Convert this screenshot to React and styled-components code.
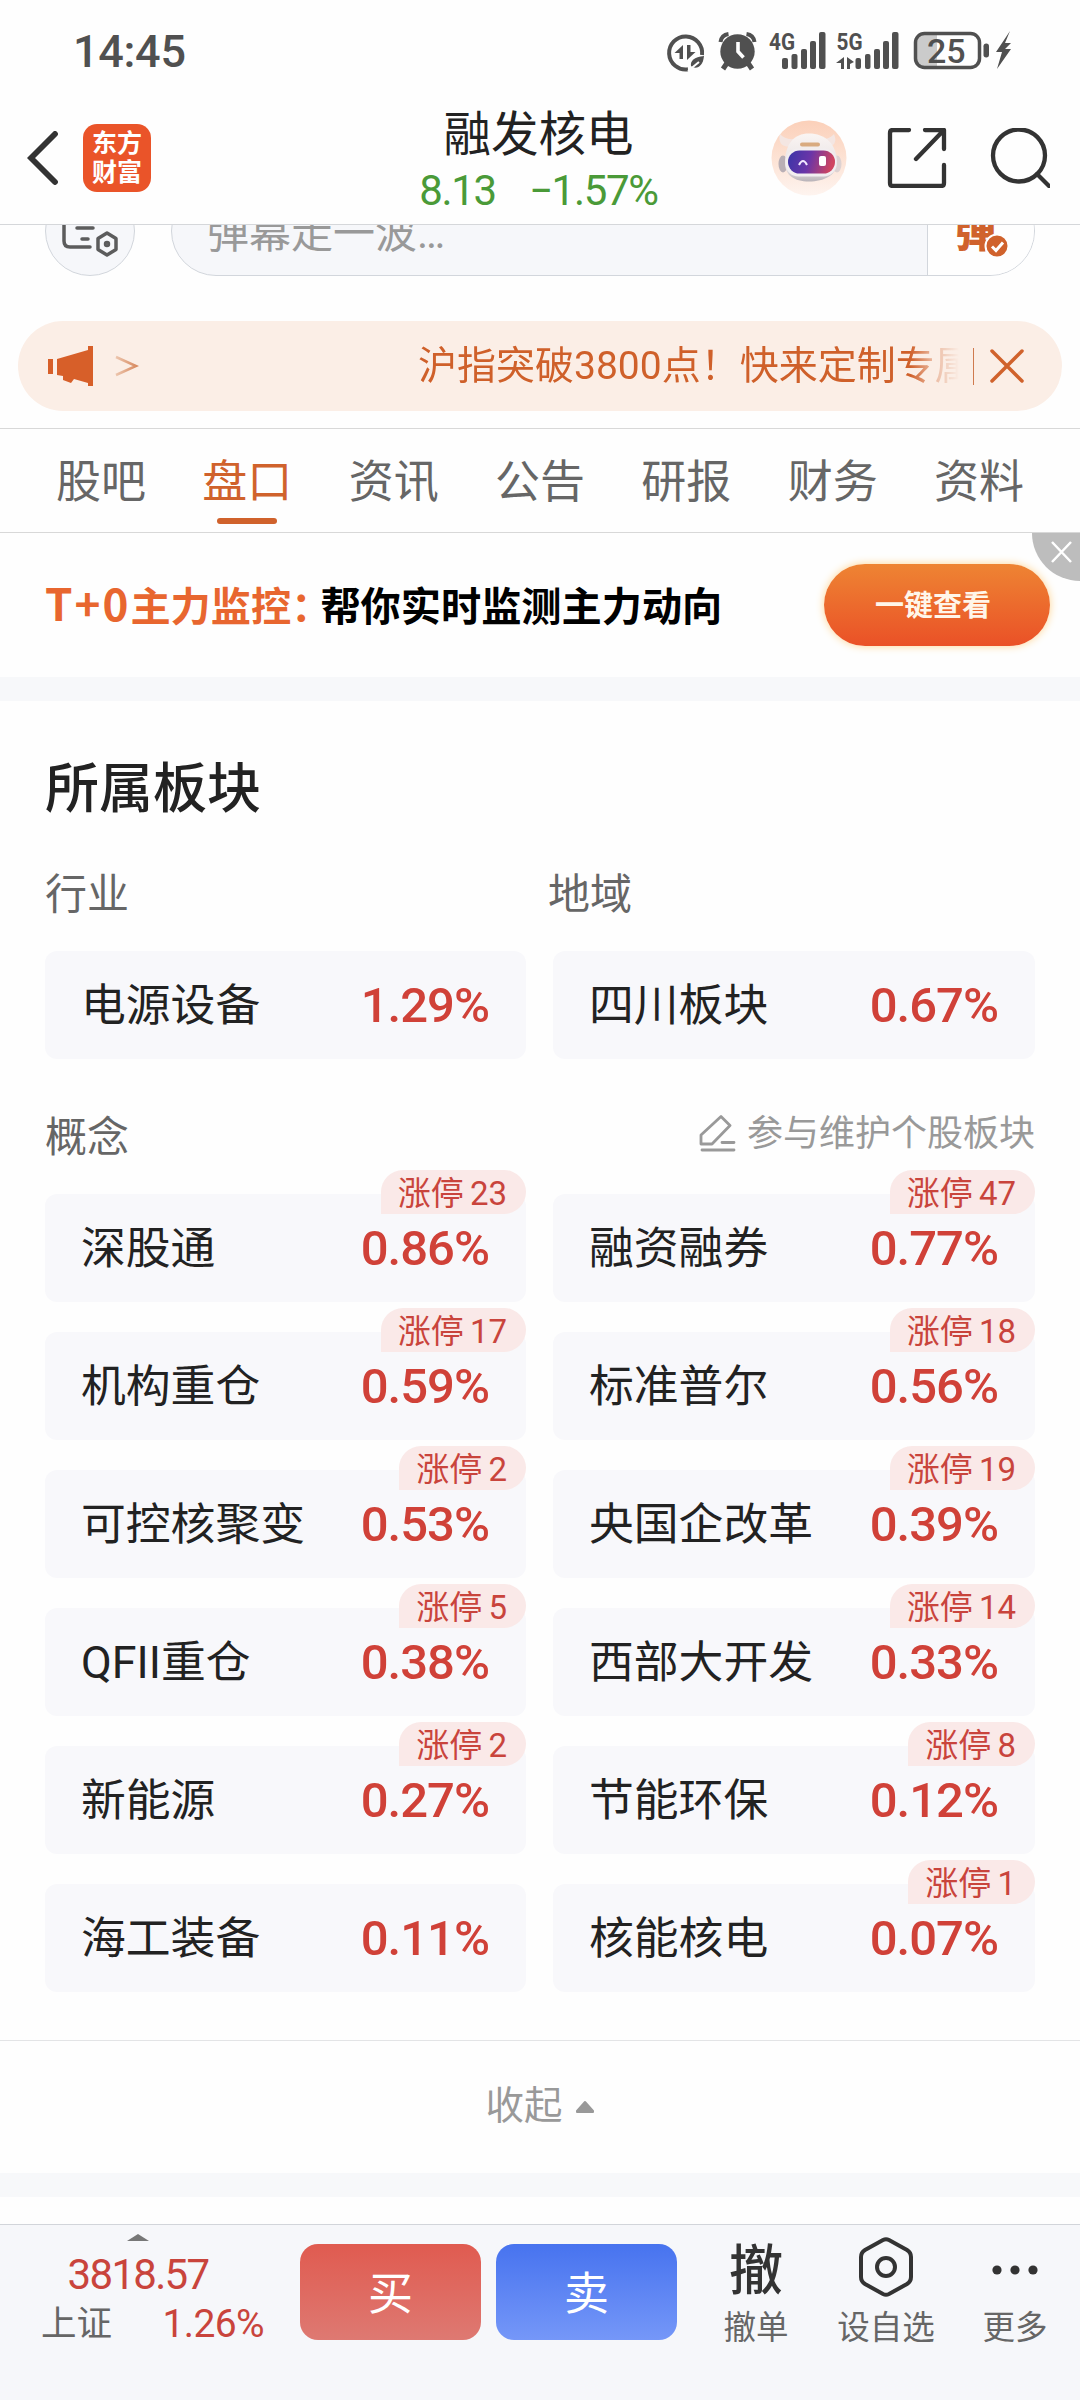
import styled, { createGlobalStyle } from "styled-components";

const GlobalStyle = createGlobalStyle`
    * {
        box-sizing: border-box;
    }
    body {
        margin: 0;
        background-color: #fefefe;
        font-family: Roboto, "Noto Sans CJK SC", sans-serif;
        color: #222;
    }
    svg {
        display: block;
        flex: none;
    }
    `;

const Page = styled.div`
    width: 1080px;
    height: 2400px;
    overflow: hidden;
    display: flex;
    flex-direction: column;
    `;

const StatusBar = styled.div`
    height: 100px;
    flex: none;
    display: flex;
    justify-content: space-between;
    padding: 23px 68px 0 73px;
    `;
const Clock = styled.span`
    font-size: 45px;
    line-height: 58px;
    font-weight: 500;
    letter-spacing: -0.3px;
    color: #505050;
    `;

const Header = styled.header`
    height: 125px;
    flex: none;
    display: flex;
    justify-content: space-between;
    border-bottom: 1px solid #d5d7da;
    padding: 0 30px 0 27px;
    `;
const HeadLeft = styled.div`
    width: 300px;
    height: 115px;
    display: flex;
    align-items: center;
    gap: 25px;
    `;
const HeadRight = styled.div`
    width: 300px;
    height: 115px;
    display: flex;
    align-items: center;
    justify-content: flex-end;
    `;
const Logo = styled.div`
    width: 68px;
    height: 68px;
    border-radius: 14px;
    background-color: #ea5429;
    color: white;
    font-size: 25px;
    line-height: 29px;
    font-weight: 700;
    text-align: center;
    padding-top: 5px;
    `;
const HeadTitle = styled.div`
    display: flex;
    flex-direction: column;
    align-items: center;
    padding-top: 7px;
    `;
const StockName = styled.h1`
    margin: 0;
    font-size: 47.5px;
    line-height: 56px;
    font-weight: 400;
    `;
const StockPrice = styled.div`
    display: flex;
    gap: 33px;
    margin-top: 6px;
    font-size: 42px;
    line-height: 44px;
    letter-spacing: -1.3px;
    color: #4a9a38;
    `;

const Danmaku = styled.div`
    height: 51px;
    flex: none;
    display: flex;
    align-items: flex-end;
    gap: 36px;
    padding: 0 45px;
    overflow: hidden;
    `;
const RoundButton = styled.button`
    width: 90px;
    height: 90px;
    flex: none;
    padding: 0;
    border: 1px solid #d2d6dc;
    border-radius: 45px;
    background-color: #f6f7fa;
    display: flex;
    align-items: center;
    justify-content: center;
    `;
const DanmakuInput = styled.div`
    flex: 1;
    height: 90px;
    border: 1px solid #d2d6dc;
    border-radius: 45px;
    overflow: hidden;
    display: flex;
    background-color: #f6f7fa;
    `;
const Placeholder = styled.span`
    flex: 1;
    padding-left: 35px;
    font-size: 42px;
    line-height: 94px;
    color: #999;
    `;
const DanmakuSwitch = styled.div`
    position: relative;
    width: 107px;
    border-left: 1px solid #d2d6dc;
    background-color: #fefefe;
    padding-left: 27px;
    font-size: 41px;
    line-height: 92px;
    font-weight: 900;
    color: #d0622c;
    svg {
        position: absolute;
        left: 56px;
        top: 46px;
    }
    `;

const Notice = styled.div`
    height: 90px;
    flex: none;
    margin: 45px 18px 17px;
    padding: 0 38px 0 30px;
    border-radius: 45px;
    background-color: #fbeee6;
    display: flex;
    align-items: center;
    `;
const NoticeText = styled.div`
    width: 544px;
    margin-left: 279px;
    overflow: hidden;
    white-space: nowrap;
    font-size: 39px;
    line-height: 90px;
    color: #cf602a;
    mask-image: linear-gradient(to right, #000 91%, rgba(0, 0, 0, 0.4) 95%, transparent 100%);
    `;
const NoticeLine = styled.div`
    width: 1px;
    height: 37px;
    margin: 0 16px 0 14px;
    background-color: #cf7a4e;
    `;

const Tabs = styled.nav`
    height: 105px;
    flex: none;
    display: flex;
    justify-content: space-between;
    padding: 0 56px;
    border-top: 1px solid #d8d8d8;
    border-bottom: 1px solid #d8d8d8;
    `;
const Tab = styled.div`
    display: flex;
    flex-direction: column;
    align-items: center;
    font-size: 45px;
    line-height: 89px;
    padding-top: 9px;
    height: 103px;
    color: ${(props) => (props.$active ? "#d0622c" : "#666")};
    &::after {
        content: "";
        width: 60px;
        height: 6px;
        margin-top: -9px;
        flex: none;
        border-radius: 3px;
        background-color: ${(props) => (props.$active ? "#d0622c" : "transparent")};
    }
    `;

const Banner = styled.div`
    position: relative;
    height: 144px;
    flex: none;
    display: flex;
    align-items: center;
    justify-content: space-between;
    padding: 0 30px 0 45px;
    `;
const BannerText = styled.div`
    padding-bottom: 1px;
    font-size: 40.2px;
    line-height: 50px;
    font-weight: 700;
    color: #000;
    white-space: nowrap;
    `;
const BannerLabel = styled.span`
    color: #e8662f;
    margin-right: -11px;
    `;
const BannerTag = styled.span`
    font-family: "Noto Sans CJK SC", sans-serif;
    font-size: 44px;
    letter-spacing: 2px;
    `;
const BannerButton = styled.button`
    width: 226px;
    height: 82px;
    padding: 0 8px 4px 0;
    border: 0;
    border-radius: 41px;
    background: linear-gradient(#ee8433, #ea5127);
    box-shadow: 0 0 8px #ffd592;
    color: #fff6ea;
    font-family: inherit;
    font-size: 29px;
    font-weight: 700;
    `;
const BannerClose = styled.div`
    position: absolute;
    top: 0;
    right: 0;
    width: 48px;
    height: 48px;
    border-bottom-left-radius: 48px;
    background-color: #bdbdbd;
    padding: 8px 0 0 19px;
    `;

const Divider = styled.div`
    height: 24px;
    flex: none;
    background-color: #f7f8fa;
    `;

const Section = styled.section`
    height: 1339px;
    flex: none;
    padding: 47px 45px 0;
    `;
const SectionTitle = styled.h2`
    margin: 0;
    font-size: 54px;
    line-height: 84px;
    font-weight: 500;
    `;
const Labels = styled.div`
    height: 119px;
    display: grid;
    grid-template-columns: 503px 1fr;
    align-items: center;
    padding-top: 6px;
    `;
const Label = styled.span`
    font-size: 42px;
    line-height: 60px;
    color: #666;
    `;
const ConceptHead = styled.div`
    height: 135px;
    display: flex;
    align-items: center;
    justify-content: space-between;
    padding-top: 22px;
    `;
const Maintain = styled.div`
    display: flex;
    align-items: center;
    gap: 11px;
    margin-top: -7px;
    font-size: 36px;
    line-height: 50px;
    color: #999;
    `;
const Cards = styled.div`
    display: grid;
    grid-template-columns: 481px 482px;
    column-gap: 27px;
    row-gap: 30px;
    `;
const Card = styled.div`
    position: relative;
    height: 108px;
    border-radius: 12px;
    background-color: #f8f8fb;
    display: flex;
    align-items: center;
    justify-content: space-between;
    padding: 2px 37px 0 36px;
    `;
const CardName = styled.span`
    font-size: 44.8px;
    line-height: 60px;
    `;
const CardRate = styled.span`
    font-size: 49px;
    line-height: 60px;
    font-weight: 500;
    letter-spacing: -1px;
    color: #d04138;
    `;
const Badge = styled.span`
    position: absolute;
    right: 0;
    top: -24px;
    height: 44px;
    padding: 0 19px 0 17px;
    border-radius: 22px 22px 22px 0;
    background-color: #fae9e8;
    color: #c9443c;
    font-size: 33px;
    line-height: 47px;
    word-spacing: -2px;
    `;

const Collapse = styled.div`
    height: 133px;
    flex: none;
    border-top: 1px solid #e3e4e6;
    display: flex;
    align-items: center;
    justify-content: center;
    gap: 12px;
    padding-bottom: 3px;
    font-size: 38.5px;
    line-height: 60px;
    color: #999;
    svg {
        margin-top: 2px;
    }
    `;
const Spacer = styled.div`
    flex: 1;
    `;

const BottomBar = styled.footer`
    height: 176px;
    flex: none;
    border-top: 1px solid #d2d5da;
    background-color: #f6f7fa;
    display: flex;
    `;
const IndexBox = styled.div`
    width: 276px;
    margin-right: 24px;
    display: flex;
    flex-direction: column;
    align-items: center;
    padding-top: 9px;
    `;
const IndexValue = styled.div`
    margin-top: 10px;
    font-size: 42px;
    line-height: 48px;
    letter-spacing: -1.7px;
    color: #c9443c;
    `;
const IndexRow = styled.div`
    width: 276px;
    padding: 0 12px 0 41px;
    display: flex;
    justify-content: space-between;
    font-size: 35.5px;
    line-height: 50px;
    color: #666;
    `;
const IndexRate = styled.span`
    font-size: 39px;
    letter-spacing: -0.6px;
    color: #c9443c;
    `;
const TradeButton = styled.button`
    width: 181px;
    height: 96px;
    margin: 19px 15px 0 0;
    padding: 0 0 4px;
    border: 0;
    border-radius: 18px;
    background: ${(props) => (props.$sell ? "linear-gradient(#4773ef, #7597f8)" : "linear-gradient(#e05b50, #de7972)")};
    color: white;
    font-family: inherit;
    font-size: 45px;
    `;
const Tool = styled.div`
    width: ${(props) => props.$width}px;
    display: flex;
    flex-direction: column;
    align-items: center;
    font-size: 32.5px;
    line-height: 44px;
    color: #666;
    `;
const ToolIcon = styled.div`
    height: 81px;
    padding-top: ${(props) => (props.$text ? "13px" : "3px")};
    display: flex;
    align-items: center;
    font-size: 54px;
    font-weight: 500;
    color: #333;
    `;

const industry = [
    { name: "电源设备", rate: "1.29%" },
    { name: "四川板块", rate: "0.67%" },
];

const concepts = [
    { name: "深股通", rate: "0.86%", up: 23 },
    { name: "融资融券", rate: "0.77%", up: 47 },
    { name: "机构重仓", rate: "0.59%", up: 17 },
    { name: "标准普尔", rate: "0.56%", up: 18 },
    { name: "可控核聚变", rate: "0.53%", up: 2 },
    { name: "央国企改革", rate: "0.39%", up: 19 },
    { name: "QFII重仓", rate: "0.38%", up: 5 },
    { name: "西部大开发", rate: "0.33%", up: 14 },
    { name: "新能源", rate: "0.27%", up: 2 },
    { name: "节能环保", rate: "0.12%", up: 8 },
    { name: "海工装备", rate: "0.11%" },
    { name: "核能核电", rate: "0.07%", up: 1 },
];

const tabs = ["股吧", "盘口", "资讯", "公告", "研报", "财务", "资料"];

const StatusIcons = () => (
    <svg width="348" height="58" viewBox="664 23 348 58" fill="#505050" fontFamily="Roboto" fontWeight="700">
        {/* data saver */}
        <path d="M702 55A16.500 16.500 0 1 0 688 69.300" fill="none" stroke="#505050" strokeWidth="4" />
        <path d="M683 45v14h-3.500v-6h-5zM687 45h3.500v7h5l-8.500 8z" />
        <path d="M704 56c-10 1-14 5-13 10 5 4 12 1 13-10z" />
        <path d="M688 71l11-9" stroke="#fefefe" strokeWidth="2" />
        {/* alarm */}
        <circle cx="737.500" cy="51.500" r="17.200" />
        <path d="M720.500 42q1-7 8-8M754.500 42q-1-7-8-8" fill="none" stroke="#505050" strokeWidth="4" />
        <path d="M727 63l-4 6M748 63l4 6" stroke="#505050" strokeWidth="5" />
        <path d="M738 42v9.500l5.500 6" fill="none" stroke="#fefefe" strokeWidth="3.600" />
        {/* signals */}
        <text x="769" y="50" fontSize="24" textLength="26" lengthAdjust="spacingAndGlyphs">4G</text>
        <rect x="782" y="58" width="6" height="11" rx="2" />
        <rect x="791.500" y="54" width="6" height="15" rx="2" />
        <rect x="801" y="49" width="6" height="20" rx="2" />
        <rect x="810" y="41" width="6" height="28" rx="2" />
        <rect x="819" y="32" width="6.500" height="37" rx="2" />
        <text x="836.500" y="50" fontSize="24" textLength="26" lengthAdjust="spacingAndGlyphs">5G</text>
        <path d="M844 57v12h-3v-6h-5zM847 57v12h3v-5l4-2z" />
        <rect x="855.500" y="58" width="5.500" height="11" rx="2" />
        <rect x="865" y="54" width="5.500" height="15" rx="2" />
        <rect x="874" y="49" width="6" height="20" rx="2" />
        <rect x="883" y="41" width="6" height="28" rx="2" />
        <rect x="892" y="32" width="6.500" height="37" rx="2" />
        {/* battery */}
        <path d="M924 34h13v33h-13q-8 0-8-8v-17q0-8 8-8z" fill="#cbcbcb" />
        <rect x="915.500" y="33.500" width="64" height="34" rx="9" fill="none" stroke="#505050" strokeWidth="3.500" />
        <rect x="983.500" y="43.500" width="5.500" height="14" rx="2.700" />
        <text x="927" y="62.500" fontSize="34" fontWeight="500">25</text>
        <path d="M1010 31l-14 21h6l-5 17 14-20h-6l6-6h-6z" />
    </svg>
);

const Robot = () => (
    <svg width="76" height="76" viewBox="0 0 76 76">
        <defs>
            <linearGradient id="robotBg" x1="0" y1="0" x2="0" y2="1">
                <stop offset="0" stopColor="#fbd0b9" />
                <stop offset="1" stopColor="#fef4ef" />
            </linearGradient>
            <linearGradient id="robotFace" x1="0" y1="0" x2="1" y2="0.15">
                <stop offset="0" stopColor="#3a35a8" />
                <stop offset="0.5" stopColor="#6a35a8" />
                <stop offset="1" stopColor="#cf4560" />
            </linearGradient>
            <linearGradient id="robotHead" x1="0" y1="0" x2="0" y2="1">
                <stop offset="0" stopColor="#faf5f3" />
                <stop offset="0.75" stopColor="#e6e0e2" />
                <stop offset="1" stopColor="#b9b3b8" />
            </linearGradient>
        </defs>
        <circle cx="38" cy="38" r="37.500" fill="url(#robotBg)" />
        <path d="M9 14q-3 12 9 13l5-8q-9 1-14-5zM63 14q5 12-8 13l-5-8q8 1 13-5z" fill="#f4e6e2" />
        <ellipse cx="12" cy="44" rx="4.500" ry="8.500" fill="#b9afb5" />
        <ellipse cx="66" cy="44" rx="4.500" ry="8.500" fill="#ddd2d2" />
        <path d="M38 13.500C23 13.500 14 24 14 43c0 12 9 18.500 24 18.500S66 55 66 43C66 24 54 13.500 38 13.500z" fill="url(#robotHead)" />
        <rect x="14.500" y="28.500" width="51" height="28" rx="13" fill="#f2eef0" />
        <rect x="29" y="22.500" width="20" height="4" rx="2" fill="#d9ab80" />
        <rect x="17" y="30.500" width="47" height="23" rx="11.500" fill="url(#robotFace)" />
        <path d="M28 45q4-8 8 0" fill="none" stroke="#f2e8ff" strokeWidth="2" />
        <rect x="48" y="36" width="7" height="10" rx="2" fill="#fff" />
    </svg>
);

const App = () => {
    return (
        <Page>
            <GlobalStyle />
            <StatusBar>
                <Clock>14:45</Clock>
                <StatusIcons />
            </StatusBar>

            <Header>
                <HeadLeft>
                    <svg width="31" height="54" viewBox="0 0 31 54" fill="none" stroke="#333" strokeWidth="5.800" strokeLinecap="round" strokeLinejoin="miter">
                        <path d="M28 3L4 27l24 24" />
                    </svg>
                    <Logo>东方<br />财富</Logo>
                </HeadLeft>
                <HeadTitle>
                    <StockName>融发核电</StockName>
                    <StockPrice><span>8.13</span><span>−1.57%</span></StockPrice>
                </HeadTitle>
                <HeadRight>
                    <Robot />
                    <svg width="203" height="60" viewBox="-41 1 203 60" fill="none" stroke="#333" strokeWidth="4.300" strokeLinecap="round" strokeLinejoin="round">
                        <path d="M21 3H5q-3 0-3 3v50q0 3 3 3h48q3 0 3-3V38M37 3h19v19M55 4L28 32" />
                        <circle cx="131" cy="28.500" r="26" />
                        <path d="M149 47l12 12" />
                    </svg>
                </HeadRight>
            </Header>

            <Danmaku>
                <RoundButton>
                    <svg width="58" height="60" viewBox="0 0 58 60" fill="none" stroke="#5c5c5c" strokeWidth="3.500" strokeLinecap="round">
                        <path d="M52 20V12q0-5-5-5H8q-5 0-5 5v28q0 6 6 6h20" />
                        <path d="M16 27h16M21 38h6" />
                        <path d="M46 32l9 5.500v11L46 54l-9-5.500v-11z" fill="#f6f7fa" strokeLinejoin="round" />
                        <circle cx="46" cy="43" r="1.500" />
                    </svg>
                </RoundButton>
                <DanmakuInput>
                    <Placeholder>弹幕走一波…</Placeholder>
                    <DanmakuSwitch>
                        弹
                        <svg width="26" height="26" viewBox="0 0 26 26">
                            <circle cx="13" cy="13" r="11.500" fill="#d0622c" stroke="#fefefe" strokeWidth="2" />
                            <path d="M8 13.500l4 4 7-8" fill="none" stroke="#fff" strokeWidth="3" />
                        </svg>
                    </DanmakuSwitch>
                </DanmakuInput>
            </Danmaku>

            <Notice>
                <svg width="91" height="40" viewBox="0 0 91 40">
                    <defs>
                        <linearGradient id="arrowFade" x1="68" y1="0" x2="90" y2="0" gradientUnits="userSpaceOnUse">
                            <stop offset="0" stopColor="#ecc5ad" />
                            <stop offset="1" stopColor="#d7875c" />
                        </linearGradient>
                    </defs>
                    <path d="M0 13h5v15H0zM9 13l31-9V0h5v40h-5v-3l-14-4-3 4-8-3v-4l-6-1z" fill="#d75f29" />
                    <path d="M68 11l20 9-20 9" fill="none" stroke="url(#arrowFade)" strokeWidth="2.500" />
                </svg>
                <NoticeText>沪指突破3800点！快来定制专属</NoticeText>
                <NoticeLine />
                <svg width="34" height="34" viewBox="0 0 34 34" stroke="#d0622c" strokeWidth="3.500" strokeLinecap="round">
                    <path d="M2 2l30 30M32 2L2 32" />
                </svg>
            </Notice>

            <Tabs>
                {tabs.map((tab) => (
                    <Tab key={tab} $active={tab === "盘口"}>{tab}</Tab>
                ))}
            </Tabs>

            <Banner>
                <BannerText>
                    <BannerLabel><BannerTag>T+0</BannerTag>主力监控：</BannerLabel>
                    帮你实时监测主力动向
                </BannerText>
                <BannerButton>一键查看</BannerButton>
                <BannerClose>
                    <svg width="22" height="22" viewBox="0 0 22 22" stroke="#fff" strokeWidth="2.500">
                        <path d="M1 1l19 20M20 1L1 21" />
                    </svg>
                </BannerClose>
            </Banner>
            <Divider />

            <Section>
                <SectionTitle>所属板块</SectionTitle>
                <Labels>
                    <Label>行业</Label>
                    <Label>地域</Label>
                </Labels>
                <Cards>
                    {industry.map((item) => (
                        <Card key={item.name}>
                            <CardName>{item.name}</CardName>
                            <CardRate>{item.rate}</CardRate>
                        </Card>
                    ))}
                </Cards>
                <ConceptHead>
                    <Label>概念</Label>
                    <Maintain>
                        <svg width="37" height="38" viewBox="0 0 37 38" fill="none" stroke="#999" strokeWidth="2.800" strokeLinecap="round" strokeLinejoin="round">
                            <path d="M2 29v-9L22 1.500l9 9-18 18.500zM23 27.500h12M3 35h32" />
                        </svg>
                        参与维护个股板块
                    </Maintain>
                </ConceptHead>
                <Cards>
                    {concepts.map((item) => (
                        <Card key={item.name}>
                            <CardName>{item.name}</CardName>
                            <CardRate>{item.rate}</CardRate>
                            {item.up && <Badge>涨停 {item.up}</Badge>}
                        </Card>
                    ))}
                </Cards>
            </Section>

            <Collapse>
                收起
                <svg width="20" height="14" viewBox="0 0 20 14" fill="#999" stroke="#999" strokeWidth="2" strokeLinejoin="round">
                    <path d="M10 2l8 9v1H2v-1z" />
                </svg>
            </Collapse>
            <Divider />
            <Spacer />

            <BottomBar>
                <IndexBox>
                    <svg width="22" height="7" viewBox="0 0 22 7">
                        <path d="M11 0l11 7H0z" fill="#777" />
                    </svg>
                    <IndexValue>3818.57</IndexValue>
                    <IndexRow>上证<IndexRate>1.26%</IndexRate></IndexRow>
                </IndexBox>
                <TradeButton>买</TradeButton>
                <TradeButton $sell>卖</TradeButton>
                <Tool $width={128}>
                    <ToolIcon $text>撤</ToolIcon>
                    撤单
                </Tool>
                <Tool $width={132}>
                    <ToolIcon>
                        <svg width="54" height="60" viewBox="0 0 54 60" fill="none" stroke="#333" strokeWidth="4">
                            <path d="M24 3q3-1.500 6 0l18 10q4 2.500 4 7v20q0 4.500-4 7L30 57q-3 1.500-6 0L6 47q-4-2.500-4-7V20q0-4.500 4-7z" />
                            <circle cx="27" cy="30" r="9" />
                        </svg>
                    </ToolIcon>
                    设自选
                </Tool>
                <Tool $width={126}>
                    <ToolIcon>
                        <svg width="46" height="60" viewBox="0 0 46 60" fill="#333">
                            <circle cx="5" cy="33" r="4.600" />
                            <circle cx="23" cy="33" r="4.600" />
                            <circle cx="41" cy="33" r="4.600" />
                        </svg>
                    </ToolIcon>
                    更多
                </Tool>
            </BottomBar>
        </Page>
    );
};

export default App;
